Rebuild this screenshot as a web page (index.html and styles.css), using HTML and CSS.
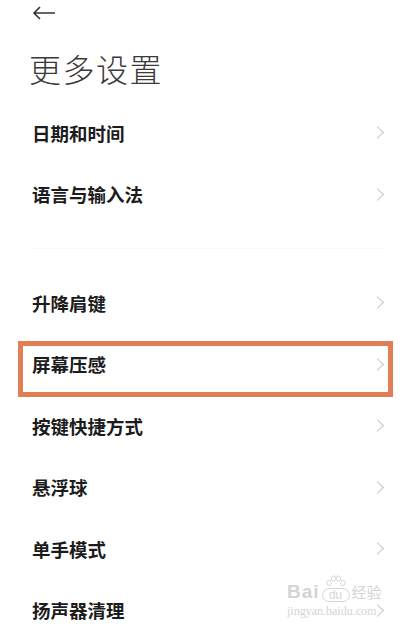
FILE: index.html
```html
<!DOCTYPE html>
<html lang="zh">
  <head>
    <meta charset="UTF-8">
    <meta name="viewport" content="width=device-width, initial-scale=1.0">
    <title>更多设置</title>
    <link rel="stylesheet" href="styles.css">
  </head>
  <body>
    <div class="page">
      <div class="topbar">
        <svg class="back" width="24" height="14" viewBox="0 0 24 14">
          <path d="M23 7H2M8 1L2 7l6 6" fill="none" stroke="#333" stroke-width="1.6"/>
        </svg>
      </div>
      <h1 class="title">更多设置</h1>

      <div class="list">
        <div class="row"><span>日期和时间</span><i class="arrow"></i></div>
        <div class="row"><span>语言与输入法</span><i class="arrow"></i></div>
      </div>

      <div class="gap"><div class="line"></div></div>

      <div class="list">
        <div class="row"><span>升降肩键</span><i class="arrow"></i></div>
        <div class="row mark"><span>屏幕压感</span><i class="arrow"></i></div>
        <div class="row"><span>按键快捷方式</span><i class="arrow"></i></div>
        <div class="row"><span>悬浮球</span><i class="arrow"></i></div>
        <div class="row"><span>单手模式</span><i class="arrow"></i></div>
        <div class="row"><span>扬声器清理</span><i class="arrow"></i></div>
      </div>

      <!-- watermark -->
      <div class="wm">
        <div class="wm-top">
          <span class="wm-bai">Bai</span>
          <span class="wm-du">
            <svg class="paw" width="22" height="14" viewBox="0 0 22 14">
              <g fill="none" stroke="#d6d6d6" stroke-width="1">
                <ellipse cx="4" cy="8" rx="2.2" ry="2.6"/>
                <ellipse cx="8.5" cy="3.5" rx="2.2" ry="2.6"/>
                <ellipse cx="13.5" cy="3.5" rx="2.2" ry="2.6"/>
                <ellipse cx="18" cy="8" rx="2.2" ry="2.6"/>
              </g>
            </svg>
            du
          </span>
          <span class="wm-jy">经验</span>
        </div>
        <div class="wm-url">jingyan.baidu.com</div>
      </div>
    </div>
  </body>
</html>
```

FILE: styles.css
```css
body {
  margin: 0;
  background: #fff;
  font-family: "Noto Sans CJK SC", "Noto Sans", sans-serif;
}

.page {
  position: relative;
  width: 404px;
  height: 630px;
  overflow: hidden;
}

.topbar {
  height: 26px;
  padding-left: 32px;
  display: flex;
  align-items: center;
}

.title {
  margin: 0;
  padding-left: 29px;
  height: 76px;
  line-height: 84px;
  font-size: 32px;
  font-weight: 300;
  color: #3a3a3a;
  letter-spacing: 1.5px;
}

.row {
  position: relative;
  height: 61.5px;
  display: flex;
  align-items: center;
  justify-content: space-between;
  padding: 0 20px 0 32px;
  font-size: 18.5px;
  font-weight: 700;
  color: #1c1c1c;
}

.arrow {
  width: 8px;
  height: 8px;
  border-top: 1.5px solid #c4c4c4;
  border-right: 1.5px solid #c4c4c4;
  transform: rotate(45deg);
  margin-right: 2px;
}

.gap {
  height: 47px;
  display: flex;
  align-items: center;
  padding: 0 21px 0 33px;
}

.line {
  flex: 1;
  height: 1px;
  background: #f7f7f7;
}

.mark::after {
  content: "";
  position: absolute;
  top: 7px;
  left: 18px;
  right: 11px;
  bottom: -1.5px;
  border: 5px solid #e27d55;
}

.wm {
  position: absolute;
  left: 287px;
  top: 572px;
  color: #d4d4d4;
  font-family: "Liberation Sans", sans-serif;
}

.wm-top {
  display: flex;
  align-items: flex-end;
  height: 30px;
}

.wm-bai {
  font-size: 19px;
  font-weight: 700;
  line-height: 20px;
  letter-spacing: 1px;
}

.wm-du {
  display: flex;
  flex-direction: column;
  align-items: center;
  font-size: 12px;
  line-height: 12px;
  border: 1px solid #d6d6d6;
  border-radius: 8px;
  padding: 0 2px;
  margin: 0 2px;
}

.paw {
  margin-top: -14px;
}

.wm-jy {
  font-family: "Noto Sans CJK SC", sans-serif;
  font-size: 15px;
  line-height: 20px;
}

.wm-url {
  font-family: "Liberation Serif", serif;
  font-size: 12px;
  margin-top: 2px;
}
```
